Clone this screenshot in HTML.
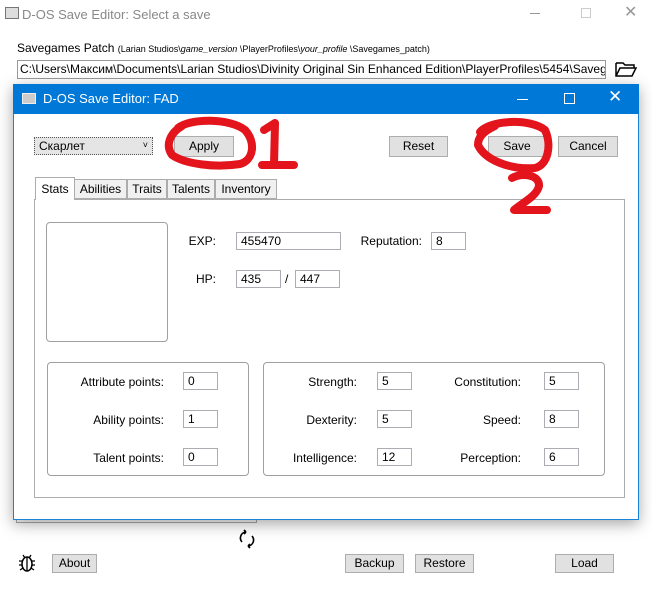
<!DOCTYPE html>
<html><head><meta charset="utf-8"><style>
*{box-sizing:border-box;margin:0;padding:0}
body{width:652px;height:602px;background:#fff;position:relative;overflow:hidden;font-family:"Liberation Sans","Noto Sans CJK SC",sans-serif;font-size:12px;color:#000}
.a{position:absolute}
.btn{position:absolute;background:#e1e1e1;border:1px solid #adadad;text-align:center;font-size:12px;line-height:17px}
.inp{position:absolute;background:#fff;border:1px solid #abadb3;font-size:12px;line-height:16px;padding-left:4px;height:18px}
.lbl{position:absolute;font-size:12px;text-align:right;width:110px}
.grp{position:absolute;border:1px solid #a0a0a0;border-radius:4px}
.tab{position:absolute;top:179px;height:20px;background:#f0f0f0;border:1px solid #acacac;font-size:12px;line-height:18px;text-align:center}
</style></head><body>
<div class="a" style="left:5px;top:7px;width:14px;height:12px;border:1px solid #777;background:#ddd"></div>
<div class="a" style="left:22px;top:7px;font-size:13px;color:#888">D-OS Save Editor: Select a save</div>
<div class="a" style="left:530px;top:13px;width:10px;height:1px;background:#999"></div>
<div class="a" style="left:581px;top:8px;width:10px;height:10px;border:1px solid #ccc"></div>
<div class="a" style="left:624px;top:2px;font-size:16px;color:#999">✕</div>
<div class="a" style="left:17px;top:41px;font-size:12px">Savegames Patch <span style="font-size:9px">(Larian Studios\<i>game_version</i> \PlayerProfiles\<i>your_profile</i> \Savegames_patch)</span></div>
<div class="a" style="left:17px;top:60px;width:589px;height:19px;border:1px solid #999;font-size:12px;line-height:17px;padding-left:2px;white-space:nowrap;overflow:hidden">C:\Users\Максим\Documents\Larian Studios\Divinity Original Sin Enhanced Edition\PlayerProfiles\5454\Savegames</div>
<svg class="a" style="left:614px;top:60px" width="24" height="18"><path d="M2 3h7l2 2h9v3M2 3v13h16l4-8H6l-4 8" fill="none" stroke="#000" stroke-width="1.5"/></svg>
<div class="a" style="left:16px;top:515px;width:241px;height:8px;border:1px solid #aaa;border-top:none"></div>
<div class="a" style="left:327px;top:517px;width:110px;height:2px;background:#555"></div>
<div class="a" style="left:505px;top:517px;width:110px;height:2px;background:#555"></div>
<svg class="a" style="left:237px;top:529px" width="20" height="20"><path d="M5 13a6 6 0 0 1 4-10M9 3l-2-2M9 3l-2 2M15 7a6 6 0 0 1-4 10M11 17l2-2M11 17l2 2" fill="none" stroke="#000" stroke-width="1.6"/></svg>
<svg class="a" style="left:17px;top:553px" width="20" height="20"><ellipse cx="10" cy="11" rx="5" ry="7" fill="none" stroke="#000" stroke-width="1.5"/><path d="M10 4v14M2 8h4M14 8h4M2 12h3M15 12h3M3 17l3-2M17 17l-3-2M6 2l2 3M14 2l-2 3" stroke="#000" stroke-width="1.3"/></svg>
<div class="btn" style="left:52px;top:554px;width:45px;height:19px">About</div>
<div class="btn" style="left:345px;top:554px;width:59px;height:19px">Backup</div>
<div class="btn" style="left:415px;top:554px;width:59px;height:19px">Restore</div>
<div class="btn" style="left:555px;top:554px;width:59px;height:19px">Load</div>
<div class="a" style="left:13px;top:84px;width:626px;height:436px;background:#fff;border:1px solid #1883d7;box-shadow:0 4px 14px rgba(0,0,0,.35)"></div>
<div class="a" style="left:13px;top:84px;width:626px;height:30px;background:#0078d7"></div>
<div class="a" style="left:22px;top:93px;width:14px;height:11px;background:#ccc;border:1px solid #eee"></div>
<div class="a" style="left:43px;top:91px;font-size:13px;color:#fff">D-OS Save Editor: FAD</div>
<div class="a" style="left:517px;top:99px;width:11px;height:1px;background:#fff"></div>
<div class="a" style="left:564px;top:93px;width:11px;height:11px;border:1px solid #fff"></div>
<div class="a" style="left:608px;top:87px;font-size:17px;color:#fff">✕</div>
<div class="a" style="left:34px;top:137px;width:119px;height:18px;background:#e5e5e5;border:1px dotted #555;font-size:12px;line-height:16px;padding-left:4px">Скарлет<span style="position:absolute;right:4px;top:-1px;font-size:9px">˅</span></div>
<div class="btn" style="left:174px;top:136px;width:60px;height:21px;line-height:19px">Apply</div>
<div class="btn" style="left:389px;top:136px;width:59px;height:21px;line-height:19px">Reset</div>
<div class="btn" style="left:488px;top:136px;width:58px;height:21px;line-height:19px">Save</div>
<div class="btn" style="left:558px;top:136px;width:60px;height:21px;line-height:19px">Cancel</div>
<div class="a" style="left:34px;top:199px;width:591px;height:299px;border:1px solid #acacac"></div>
<div class="tab" style="left:74px;width:53px">Abilities</div>
<div class="tab" style="left:127px;width:40px">Traits</div>
<div class="tab" style="left:167px;width:48px">Talents</div>
<div class="tab" style="left:215px;width:62px">Inventory</div>
<div class="tab" style="left:35px;top:177px;width:40px;height:23px;background:#fff;border-bottom:none;line-height:22px">Stats</div>
<div class="grp" style="left:46px;top:222px;width:122px;height:120px"></div>
<div class="lbl" style="left:120px;top:234px;width:96px">EXP:</div>
<div class="inp" style="left:236px;top:232px;width:105px">455470</div>
<div class="lbl" style="left:310px;top:234px;width:112px">Reputation:</div>
<div class="inp" style="left:431px;top:232px;width:35px">8</div>
<div class="lbl" style="left:120px;top:272px;width:96px">HP:</div>
<div class="inp" style="left:236px;top:270px;width:45px">435</div>
<div class="a" style="left:285px;top:272px">/</div>
<div class="inp" style="left:295px;top:270px;width:45px">447</div>
<div class="grp" style="left:47px;top:362px;width:202px;height:114px"></div>
<div class="grp" style="left:263px;top:362px;width:342px;height:114px"></div>
<div class="lbl" style="left:54px;top:375px">Attribute points:</div>
<div class="lbl" style="left:54px;top:413px">Ability points:</div>
<div class="lbl" style="left:54px;top:451px">Talent points:</div>
<div class="inp" style="left:183px;top:372px;width:35px">0</div>
<div class="inp" style="left:183px;top:410px;width:35px">1</div>
<div class="inp" style="left:183px;top:448px;width:35px">0</div>
<div class="lbl" style="left:247px;top:375px">Strength:</div>
<div class="lbl" style="left:247px;top:413px">Dexterity:</div>
<div class="lbl" style="left:247px;top:451px">Intelligence:</div>
<div class="inp" style="left:377px;top:372px;width:35px">5</div>
<div class="inp" style="left:377px;top:410px;width:35px">5</div>
<div class="inp" style="left:377px;top:448px;width:35px">12</div>
<div class="lbl" style="left:411px;top:375px">Constitution:</div>
<div class="lbl" style="left:411px;top:413px">Speed:</div>
<div class="lbl" style="left:411px;top:451px">Perception:</div>
<div class="inp" style="left:544px;top:372px;width:35px">5</div>
<div class="inp" style="left:544px;top:410px;width:35px">8</div>
<div class="inp" style="left:544px;top:448px;width:35px">6</div>
<svg class="a" style="left:0;top:0" width="652" height="602"><g fill="none" stroke="#e3141c" stroke-width="8" stroke-linecap="round" stroke-linejoin="round">
<path d="M178 128C190 118 230 118 245 130C256 142 254 160 240 164C215 168 185 164 172 155C165 145 170 133 182 126"/>
<path d="M264 130L275 123L274 165M262 165H294"/>
<path d="M480 132C490 120 530 118 545 130C552 145 548 165 535 168C510 170 485 160 478 145C478 138 482 132 495 126"/>
<path d="M512 178C522 172 540 175 539 186C537 196 522 203 514 210H547"/>
</g></svg>
</body></html>
